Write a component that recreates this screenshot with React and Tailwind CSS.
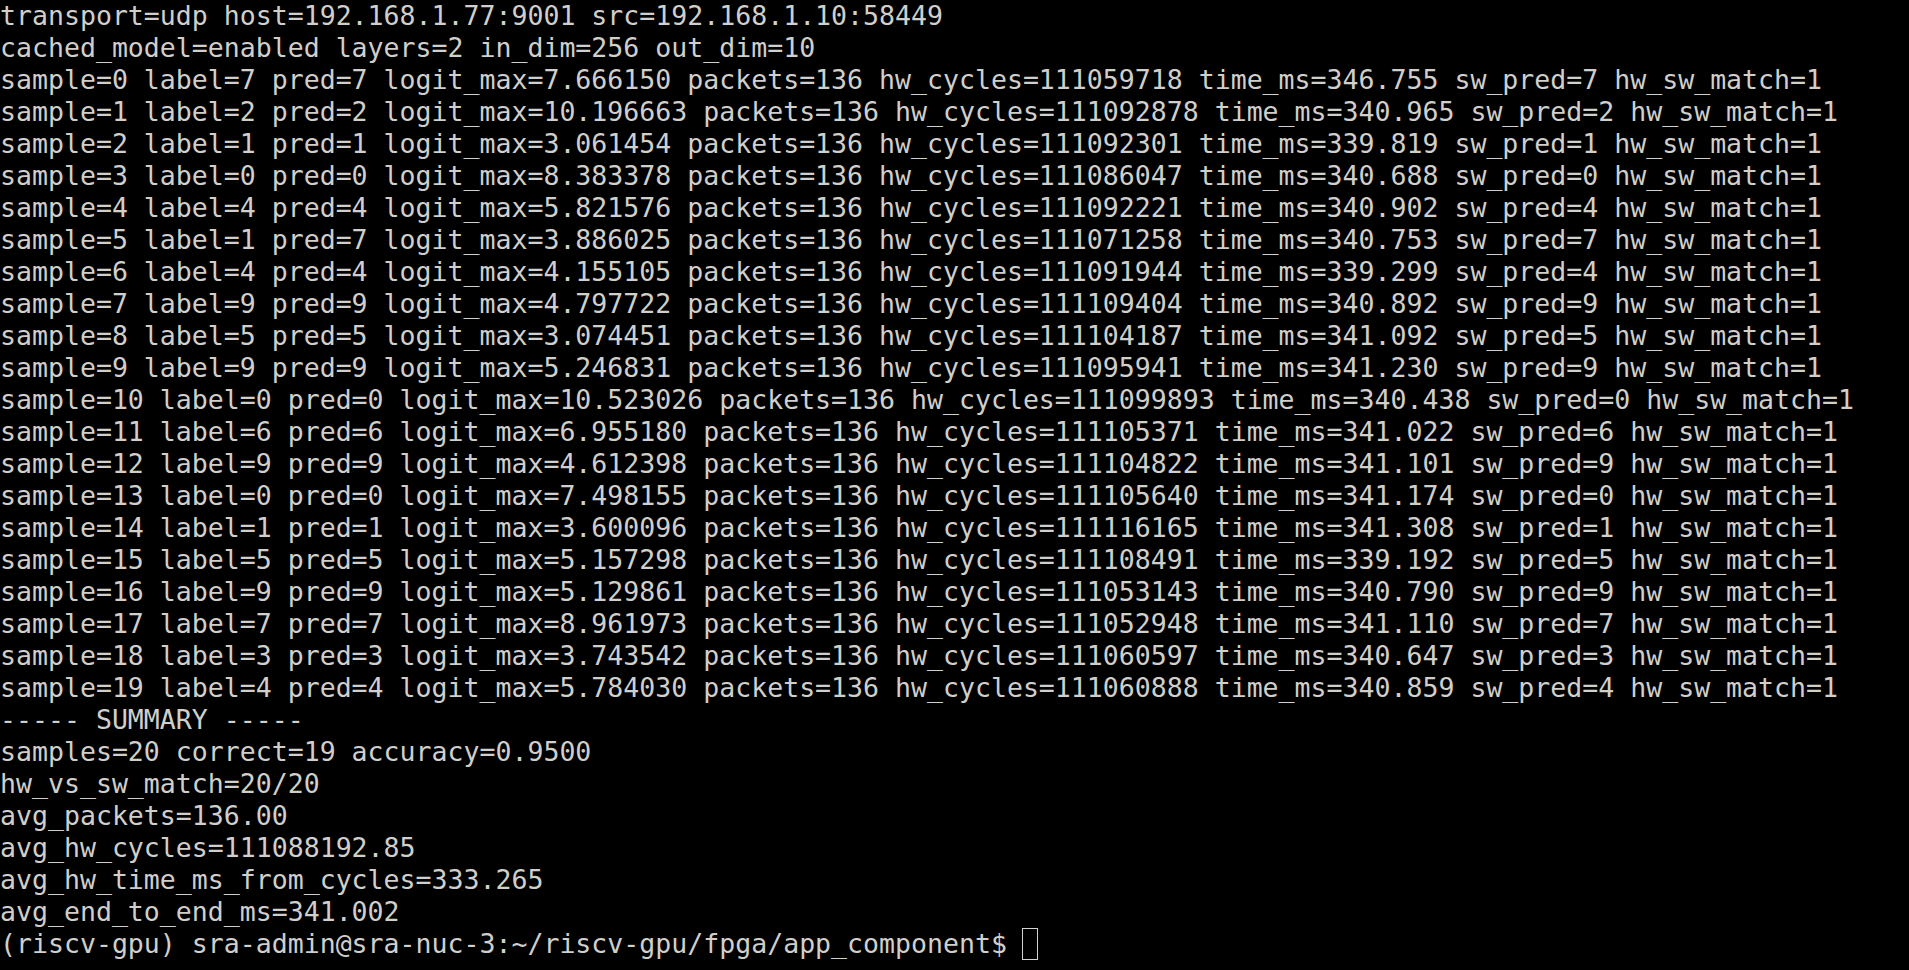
const lines = [
  "transport=udp host=192.168.1.77:9001 src=192.168.1.10:58449",
  "cached_model=enabled layers=2 in_dim=256 out_dim=10",
  "sample=0 label=7 pred=7 logit_max=7.666150 packets=136 hw_cycles=111059718 time_ms=346.755 sw_pred=7 hw_sw_match=1",
  "sample=1 label=2 pred=2 logit_max=10.196663 packets=136 hw_cycles=111092878 time_ms=340.965 sw_pred=2 hw_sw_match=1",
  "sample=2 label=1 pred=1 logit_max=3.061454 packets=136 hw_cycles=111092301 time_ms=339.819 sw_pred=1 hw_sw_match=1",
  "sample=3 label=0 pred=0 logit_max=8.383378 packets=136 hw_cycles=111086047 time_ms=340.688 sw_pred=0 hw_sw_match=1",
  "sample=4 label=4 pred=4 logit_max=5.821576 packets=136 hw_cycles=111092221 time_ms=340.902 sw_pred=4 hw_sw_match=1",
  "sample=5 label=1 pred=7 logit_max=3.886025 packets=136 hw_cycles=111071258 time_ms=340.753 sw_pred=7 hw_sw_match=1",
  "sample=6 label=4 pred=4 logit_max=4.155105 packets=136 hw_cycles=111091944 time_ms=339.299 sw_pred=4 hw_sw_match=1",
  "sample=7 label=9 pred=9 logit_max=4.797722 packets=136 hw_cycles=111109404 time_ms=340.892 sw_pred=9 hw_sw_match=1",
  "sample=8 label=5 pred=5 logit_max=3.074451 packets=136 hw_cycles=111104187 time_ms=341.092 sw_pred=5 hw_sw_match=1",
  "sample=9 label=9 pred=9 logit_max=5.246831 packets=136 hw_cycles=111095941 time_ms=341.230 sw_pred=9 hw_sw_match=1",
  "sample=10 label=0 pred=0 logit_max=10.523026 packets=136 hw_cycles=111099893 time_ms=340.438 sw_pred=0 hw_sw_match=1",
  "sample=11 label=6 pred=6 logit_max=6.955180 packets=136 hw_cycles=111105371 time_ms=341.022 sw_pred=6 hw_sw_match=1",
  "sample=12 label=9 pred=9 logit_max=4.612398 packets=136 hw_cycles=111104822 time_ms=341.101 sw_pred=9 hw_sw_match=1",
  "sample=13 label=0 pred=0 logit_max=7.498155 packets=136 hw_cycles=111105640 time_ms=341.174 sw_pred=0 hw_sw_match=1",
  "sample=14 label=1 pred=1 logit_max=3.600096 packets=136 hw_cycles=111116165 time_ms=341.308 sw_pred=1 hw_sw_match=1",
  "sample=15 label=5 pred=5 logit_max=5.157298 packets=136 hw_cycles=111108491 time_ms=339.192 sw_pred=5 hw_sw_match=1",
  "sample=16 label=9 pred=9 logit_max=5.129861 packets=136 hw_cycles=111053143 time_ms=340.790 sw_pred=9 hw_sw_match=1",
  "sample=17 label=7 pred=7 logit_max=8.961973 packets=136 hw_cycles=111052948 time_ms=341.110 sw_pred=7 hw_sw_match=1",
  "sample=18 label=3 pred=3 logit_max=3.743542 packets=136 hw_cycles=111060597 time_ms=340.647 sw_pred=3 hw_sw_match=1",
  "sample=19 label=4 pred=4 logit_max=5.784030 packets=136 hw_cycles=111060888 time_ms=340.859 sw_pred=4 hw_sw_match=1",
  "----- SUMMARY -----",
  "samples=20 correct=19 accuracy=0.9500",
  "hw_vs_sw_match=20/20",
  "avg_packets=136.00",
  "avg_hw_cycles=111088192.85",
  "avg_hw_time_ms_from_cycles=333.265",
  "avg_end_to_end_ms=341.002",
];

export default function App() {
  return (
    <div className="w-[1909px] h-[970px] bg-black overflow-hidden text-[#d0cfcc] font-['DejaVu_Sans_Mono',monospace] text-[26.55px] leading-[32px] whitespace-pre">
      {lines.map((l, i) => (
        <div key={i} className="h-[32px]">{l}</div>
      ))}
      <div className="h-[32px] flex items-center">
        <span>(riscv-gpu) sra-admin@sra-nuc-3:~/riscv-gpu/fpga/app_component$ </span>
        <span className="inline-block w-[16px] h-[32px] border-[1.5px] border-[#d3d3d3] -ml-[1px]"></span>
      </div>
    </div>
  );
}
